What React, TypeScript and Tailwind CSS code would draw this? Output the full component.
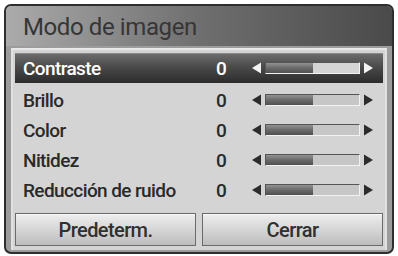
import React from "react";

const rows = [
  { label: "Contraste", value: "0", selected: true },
  { label: "Brillo", value: "0" },
  { label: "Color", value: "0" },
  { label: "Nitidez", value: "0" },
  { label: "Reducción de ruido", value: "0" },
];

function Arrow({ dir, light }: { dir: "l" | "r"; light?: boolean }) {
  const fill = light ? "#f4f4f4" : "#2c2c2c";
  return (
    <svg width="9" height="12" viewBox="0 0 9 12" className="shrink-0">
      {dir === "l" ? (
        <polygon points="0,6 9,0.5 9,11.5" fill={fill} />
      ) : (
        <polygon points="9,6 0,0.5 0,11.5" fill={fill} />
      )}
    </svg>
  );
}

function Row({ label, value, selected }: { label: string; value: string; selected?: boolean }) {
  return (
    <div
      className={
        "flex items-center pl-[8px] " +
        (selected
          ? "h-[30px] bg-gradient-to-b from-[#6e6e6e] via-[#484848] to-[#2c2c2c] text-white shadow-[inset_0_1px_0_#8a8a8a] mb-[2px]"
          : "h-[30px] text-[#2a2a2a]")
      }
    >
      <div className="w-[193px] text-[19px] font-medium tracking-[-0.6px] leading-none">{label}</div>
      <div className="w-[10px] text-[19px] font-medium leading-none">{value}</div>
      <div className="ml-[26px] flex items-center">
        <Arrow dir="l" light={selected} />
        <div
          className={
            "ml-[4px] w-[95px] h-[12px] flex border-t border-t-[#555] border-b border-b-[#f2f2f2] border-l border-l-[#555] border-r border-r-[#f2f2f2] " +
            (selected ? "bg-[#d4d4d4]" : "bg-[#c6c6c6]")
          }
        >
          <div className="w-[47px] h-full bg-gradient-to-b from-[#929292] via-[#6a6a6a] to-[#505050]" />
        </div>
        <div className="ml-[4px]">
          <Arrow dir="r" light={selected} />
        </div>
      </div>
    </div>
  );
}

function Btn({ children }: { children: React.ReactNode }) {
  return (
    <div className="flex-1 h-[33px] border border-[#6a6a6a] bg-gradient-to-b from-[#eeeeee] via-[#d6d6d6] to-[#bdbdbd] shadow-[inset_0_1px_0_#fafafa] flex items-center justify-center text-[20px] font-medium tracking-[-0.6px] text-[#303030] leading-none">
      {children}
    </div>
  );
}

export default function App() {
  return (
    <div
      className="w-[398px] h-[256px] bg-white pt-[4px] pl-[4px]"
      style={{ fontFamily: "Roboto, 'Liberation Sans', sans-serif" }}
    >
      <div className="w-[390px] h-[250px] rounded-[7px] border-2 border-[#2e2e2e] overflow-hidden flex flex-col bg-[#9c9c9c]">
        <div className="h-[40px] shrink-0 bg-gradient-to-r from-[#ababab] via-[#6f6f6f] to-[#4a4a4a] flex items-center pl-[17px]">
          <span className="text-[24px] tracking-[-0.4px] text-[#363636] leading-none mt-[2px]">Modo de imagen</span>
        </div>
        <div className="flex-1 px-[5px] pt-[2px] pb-[2px] flex flex-col">
          <div className="flex-1 bg-[#d4d4d4] border-t-2 border-t-[#e8e8e8] border-l-2 border-l-[#e0e0e0] border-r-2 border-r-[#e0e0e0] flex flex-col">
            <div className="px-[2px] pt-[3px]">
              {rows.map((r) => (
                <Row key={r.label} {...r} />
              ))}
            </div>
            <div className="mt-auto flex gap-[6px] px-[2px] pb-[4px]">
              <Btn>Predeterm.</Btn>
              <Btn>Cerrar</Btn>
            </div>
          </div>
        </div>
      </div>
    </div>
  );
}
